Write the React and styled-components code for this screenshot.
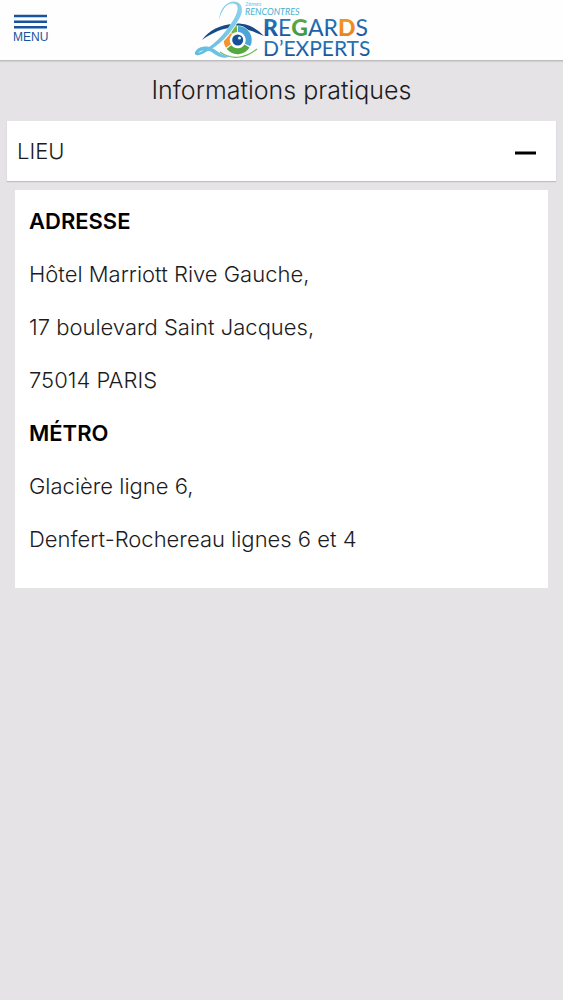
import React, { useState } from "react";
import styled, { createGlobalStyle } from "styled-components";

const GlobalStyle = createGlobalStyle`
  * { box-sizing: border-box; }
  body {
    margin: 0;
    background: #e5e3e6;
    color: #1c1b1e;
    font-family: Inter, "Liberation Sans", sans-serif;
    font-size: 22px;
    font-weight: 300;
    line-height: 31px;
  }
`;

const Header = styled.header`
  display: grid;
  grid-template-columns: 1fr auto 1fr;
  height: 61px;
  background: #fefefe;
  border-bottom: 1px solid #bdbcbe;
  box-shadow: 0 1px 1px #d2d1d3;
`;

const MenuButton = styled.button`
  justify-self: start;
  align-self: start;
  display: flex;
  flex-direction: column;
  align-items: center;
  gap: 1px;
  margin: 14px 0 0 13px;
  padding: 0;
  border: 0;
  background: none;
  color: #17549b;
  font: 400 12px/14px "Liberation Sans", Arial, sans-serif;
  cursor: pointer;
`;

const HomeLink = styled.a`
  display: block;
  height: 60px;
  svg { display: block; }
`;

const Title = styled.h1`
  margin: 0;
  padding: 14px 0 15px;
  text-align: center;
  font-size: 25px;
  font-weight: 300;
  line-height: 31px;
`;

const Section = styled.section`
  margin: 0 7px;
`;

const SectionHeading = styled.h2`
  margin: 0;
  font-size: 22px;
  font-weight: 300;
`;

const SectionToggle = styled.button`
  display: flex;
  align-items: center;
  justify-content: space-between;
  width: 100%;
  height: 60px;
  padding: 0 20px 0 10px;
  border: 0;
  background: #fff;
  box-shadow: 0 1px 1px #bfbdc0;
  color: inherit;
  font: inherit;
  text-align: left;
  cursor: pointer;
`;

const Panel = styled.div`
  margin: 9px 8px 0;
  padding: 16px 14px 11px;
  background: #fff;
`;

const Line = styled.p`
  margin: 0 0 22px;
`;

const Subheading = styled.h3`
  margin: 0 0 22px;
  color: #000;
  font-size: 22px;
  font-weight: 600;
`;

function MenuIcon() {
  return (
    <svg width="33" height="15" viewBox="0 0 33 15" aria-hidden="true">
      <path d="M0 2h33M0 7.7h33M0 13.3h33" stroke="#17549b" strokeWidth="2.5" />
    </svg>
  );
}

function Logo() {
  return (
    <svg width="176" height="60" viewBox="0 0 176 60" role="img" aria-label="2es Rencontres Regards d'Experts">
      <defs>
        <linearGradient id="swash" x1="0" y1="1" x2="1" y2="0">
          <stop offset="0" stopColor="#62bade" />
          <stop offset="1" stopColor="#8bd3ed" />
        </linearGradient>
        <linearGradient id="blue" x1="0" y1="0" x2="0" y2="1">
          <stop offset="0" stopColor="#2a86c4" />
          <stop offset="1" stopColor="#164b96" />
        </linearGradient>
        <linearGradient id="green" x1="0" y1="0" x2="1" y2="1">
          <stop offset="0" stopColor="#7ab844" />
          <stop offset="1" stopColor="#168144" />
        </linearGradient>
        <linearGradient id="orange" x1="0" y1="0" x2="1" y2="1">
          <stop offset="0" stopColor="#f7b52a" />
          <stop offset="1" stopColor="#e77719" />
        </linearGradient>
      </defs>
      <path d="M8 40C15 30 26 25 41 23.500C54 23 62 28 70 36C63 33 56 30 47 28C32 26 20 32 8 40Z" fill="#174b87" />
      <circle cx="43.700" cy="40" r="14.500" fill="#fff" />
      <g fill="none" strokeWidth="6">
        <path d="M34.500 46A11 11 0 0 1 36 32" stroke="#f3942c" />
        <path d="M36.500 31.500A11 11 0 0 1 43 29" stroke="#72b545" />
        <path d="M44 29A11 11 0 0 1 53.500 45" stroke="#4ba5d8" />
        <path d="M53 46A11 11 0 0 1 35 47" stroke="#55a93f" />
      </g>
      <circle cx="43.700" cy="40" r="5.500" fill="#174f98" />
      <circle cx="45.500" cy="38" r="1.600" fill="#d8eefa" />
      <path d="M26 52C37 60 51 59 63 49" fill="none" stroke="#73b95a" strokeWidth="1.200" />
      <path d="M25.500 18C27 8 33 2.500 39 2.500C47 3 46 14 41 22C34 34 24 46 11 52" fill="none" stroke="#fff" strokeWidth="5" />
      <path d="M25 20C26 8 33 1.500 40 1.500C49 2 50 11 45 19C36 35 25 46 11 52.500C5 56 0 56 1 52.500C3 47 12 45 18 48C24 51 28 57 37 55.500C31 60 24 57 19 53C15 50 8 49 4 53C18 48 31 34 40 19C45 10 45 4 39 3.500C33 3 28 9 25 20Z" fill="url(#swash)" />
      <text x="51" y="6" fill="#74c5dd" fontFamily="Lato, sans-serif" fontSize="6" fontStyle="italic" fontWeight="400">2èmes</text>
      <text x="51" y="15" fill="#48b1d0" fontFamily="Lato, sans-serif" fontSize="9" fontStyle="italic" fontWeight="400">RENCONTRES</text>
      <text x="69" y="36" fill="url(#blue)" fontFamily="Lato, sans-serif" fontSize="23" fontWeight="400">
        <tspan fontWeight="900">R</tspan>E<tspan fill="url(#green)" fontWeight="900">G</tspan>AR<tspan fill="url(#orange)" fontWeight="900">D</tspan>S
      </text>
      <text x="69" y="56" fill="url(#blue)" fontFamily="Lato, sans-serif" fontSize="21" fontWeight="400">D’EXPERTS</text>
    </svg>
  );
}

export default function App() {
  const [open, setOpen] = useState(true);
  return (
    <>
      <GlobalStyle />
      <Header>
        <MenuButton type="button">
          <MenuIcon />
          MENU
        </MenuButton>
        <HomeLink href="#">
          <Logo />
        </HomeLink>
      </Header>
      <main>
        <Title>Informations pratiques</Title>
        <Section>
          <SectionHeading>
            <SectionToggle type="button" aria-expanded={open} aria-controls="lieu" onClick={() => setOpen(!open)}>
              LIEU
              <svg width="21" height="21" viewBox="0 0 21 21" aria-hidden="true">
                <path d={open ? "M0 12h21" : "M0 12h21M10.5 1v21"} stroke="#000" strokeWidth="3" />
              </svg>
            </SectionToggle>
          </SectionHeading>
          <Panel id="lieu" hidden={!open}>
            <Subheading>ADRESSE</Subheading>
            <Line>Hôtel Marriott Rive Gauche,</Line>
            <Line>17 boulevard Saint Jacques,</Line>
            <Line>75014 PARIS</Line>
            <Subheading>MÉTRO</Subheading>
            <Line>Glacière ligne 6,</Line>
            <Line>Denfert-Rochereau lignes 6 et 4</Line>
          </Panel>
        </Section>
      </main>
    </>
  );
}
